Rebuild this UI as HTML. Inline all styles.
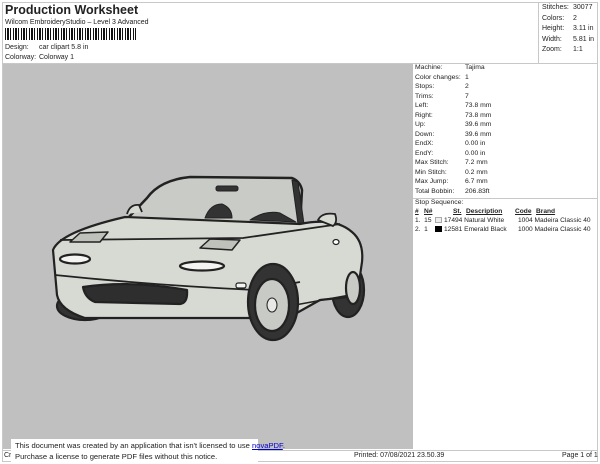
<!DOCTYPE html>
<html><head><meta charset="utf-8"><style>
*{margin:0;padding:0;box-sizing:border-box}
body{width:600px;height:464px;background:#fff;font-family:"Liberation Sans",sans-serif;color:#222;position:relative;overflow:hidden;font-size:7px}
.a{position:absolute;white-space:nowrap}
.line{position:absolute;background:#c8c8c8}
</style></head><body>
<div class="line" style="left:2px;top:2px;width:596px;height:1px"></div>
<div class="line" style="left:2px;top:2px;width:1px;height:460px"></div>
<div class="line" style="left:597px;top:2px;width:1px;height:460px"></div>
<div class="line" style="left:538px;top:2px;width:1px;height:61px"></div>
<div class="a" style="left:5px;top:3px;font-size:12.5px;font-weight:bold">Production Worksheet</div>
<div class="a" style="left:5px;top:19px">Wilcom EmbroideryStudio – Level 3 Advanced</div>
<div class="a" style="left:5px;top:28px;width:131px;height:12px;background:repeating-linear-gradient(90deg,#111 0 1px,#fff 1px 2px,#111 2px 4px,#fff 4px 5px,#111 5px 6px,#fff 6px 8px)"></div>
<div class="a" style="left:5px;top:44px">Design:</div><div class="a" style="left:39px;top:44px">car clipart 5.8 in</div>
<div class="a" style="left:5px;top:54px">Colorway:</div><div class="a" style="left:39px;top:54px">Colorway 1</div>
<div class="a" style="left:542px;top:3px;line-height:10.5px">Stitches:<br>Colors:<br>Height:<br>Width:<br>Zoom:</div>
<div class="a" style="left:573px;top:3px;line-height:10.5px">30077<br>2<br>3.11 in<br>5.81 in<br>1:1</div>
<div class="a" style="left:3px;top:64px;width:410px;height:385px;background:#c0c0c0"></div>
<div class="line" style="left:2px;top:63px;width:596px;height:1px"></div>
<div class="a" style="left:415px;top:63px;line-height:9.5px;font-size:6.8px">Machine:<br>Color changes:<br>Stops:<br>Trims:<br>Left:<br>Right:<br>Up:<br>Down:<br>EndX:<br>EndY:<br>Max Stitch:<br>Min Stitch:<br>Max Jump:<br>Total Bobbin:</div>
<div class="a" style="left:465px;top:63px;line-height:9.5px;font-size:6.8px">Tajima<br>1<br>2<br>7<br>73.8 mm<br>73.8 mm<br>39.6 mm<br>39.6 mm<br>0.00 in<br>0.00 in<br>7.2 mm<br>0.2 mm<br>6.7 mm<br>206.83ft</div>
<div class="line" style="left:413px;top:198px;width:185px;height:1px"></div>
<div class="a" style="left:415px;top:199px;font-size:6.8px">Stop Sequence:</div>
<div style="font-size:6.6px">
<div class="a" style="left:415px;top:208px;font-weight:bold;text-decoration:underline">#</div>
<div class="a" style="left:424px;top:208px;font-weight:bold;text-decoration:underline">N#</div>
<div class="a" style="left:453px;top:208px;font-weight:bold;text-decoration:underline">St.</div>
<div class="a" style="left:466px;top:208px;font-weight:bold;text-decoration:underline">Description</div>
<div class="a" style="left:515px;top:208px;font-weight:bold;text-decoration:underline">Code</div>
<div class="a" style="left:536px;top:208px;font-weight:bold;text-decoration:underline">Brand</div>
<div class="a" style="left:415px;top:217px">1.&nbsp; 15</div>
<div class="a" style="left:435px;top:217px;width:7px;height:6px;background:#eee;border:1px solid #aaa"></div>
<div class="a" style="left:444px;top:217px">17494 Natural White</div>
<div class="a" style="left:518px;top:217px">1004 Madeira Classic 40</div>
<div class="a" style="left:415px;top:226px">2.&nbsp; 1</div>
<div class="a" style="left:435px;top:226px;width:7px;height:6px;background:#000"></div>
<div class="a" style="left:444px;top:226px">12581 Emerald Black</div>
<div class="a" style="left:518px;top:226px">1000 Madeira Classic 40</div>
</div>
<div class="line" style="left:2px;top:450px;width:596px;height:1px"></div>
<div class="line" style="left:2px;top:461px;width:596px;height:1px"></div>
<div class="a" style="left:4px;top:452px">Cr</div>
<div class="a" style="left:354px;top:452px">Printed: 07/08/2021 23.50.39</div>
<div class="a" style="left:562px;top:452px">Page 1 of 1</div>
<div class="a" style="left:11px;top:439px;width:247px;height:25px;background:#fff"></div>
<div class="a" style="left:15px;top:441px;font-size:7.6px">This document was created by an application that isn't licensed to use <span style="color:#00c;text-decoration:underline">novaPDF</span>.</div>
<div class="a" style="left:15px;top:452px;font-size:7.6px">Purchase a license to generate PDF files without this notice.</div>
<svg class="a" style="left:0;top:0" width="600" height="464" viewBox="0 0 600 464">
<g stroke="#222" stroke-width="2.2" stroke-linejoin="round">
<ellipse cx="85" cy="306" rx="28" ry="14" fill="#333"/>
<ellipse cx="348" cy="290" rx="16" ry="27" fill="#333"/>
<path d="M147 198 Q160 180 190 177 L292 178 Q300 181 302 190 L300 225 L128 218 Z" fill="#c9ccc6" stroke-width="2.5"/>
<path d="M205 218 Q210 204 222 204 Q232 208 232 218 Z M250 220 Q265 210 280 213 L296 222 Z" fill="#333" stroke-width="1"/>
<rect x="216" y="186" width="22" height="5" rx="2" fill="#333" stroke-width="1"/>
<path d="M292 180 L298 224 L304 224 L298 182 Z" fill="#333" stroke-width="1"/>
<path d="M53 250 Q60 232 125 217 L300 224 Q335 217 352 232 Q364 242 362 262 L357 296 L320 300 L295 314 L253 318 L85 318 Q60 310 57 295 Z" fill="#d7dad3"/>
<path d="M60 240 L243 238 L340 224" fill="none" stroke-width="1.8"/>
<path d="M55 275 Q150 285 255 290 L300 282" fill="none" stroke-width="1.8"/>
<path d="M295 305 L350 295" fill="none" stroke-width="1.5"/>
<path d="M83 287 Q130 280 187 290 Q188 303 180 304 L95 302 Q85 298 83 287 Z" fill="#2e2e2e"/>
<ellipse cx="75" cy="259" rx="15" ry="4.5" fill="#f4f4f2"/>
<ellipse cx="202" cy="266" rx="22" ry="4.5" fill="#f4f4f2"/>
<rect x="236" y="283" width="10" height="5" rx="2" fill="#f4f4f2" stroke-width="1.2"/>
<path d="M70 242 L80 233 L108 232 L100 242 Z" fill="#bfc2bb" stroke-width="1.5"/>
<path d="M200 248 L210 239 L240 240 L232 250 Z" fill="#bfc2bb" stroke-width="1.5"/>
<ellipse cx="273" cy="302" rx="25" ry="38" fill="#333"/>
<ellipse cx="272" cy="305" rx="17" ry="26" fill="#c8cac5"/>
<ellipse cx="272" cy="305" rx="5" ry="7" fill="#e8e8e6" stroke-width="1"/>
<ellipse cx="353" cy="288" rx="7" ry="16" fill="#c8cac5"/>
<path d="M318 220 Q322 212 335 214 Q338 222 333 226 Z" fill="#d7dad3" stroke-width="1.8"/>
<ellipse cx="336" cy="242" rx="3" ry="2.5" fill="#fff" stroke-width="1.2"/>
<path d="M127 214 Q130 204 139 205 L142 212" fill="#d7dad3" stroke-width="1.8"/>
</g>
</svg>
</body></html>
